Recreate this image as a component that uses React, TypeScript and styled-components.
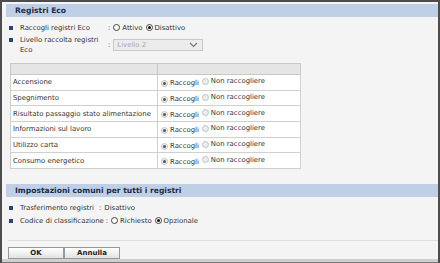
import React from "react";
import styled, { createGlobalStyle } from "styled-components";

const GlobalStyle = createGlobalStyle`
  html, body {
    margin: 0;
    padding: 0;
    background: #f4f4f4;
  }
  * {
    box-sizing: border-box;
  }
`;

const rows = [
  "Accensione",
  "Spegnimento",
  "Risultato passaggio stato alimentazione",
  "Informazioni sul lavoro",
  "Utilizzo carta",
  "Consumo energetico",
];

function Radio({ checked, faded }: { checked?: boolean; faded?: boolean }) {
  return (
    <RadioCircle $faded={faded}>{checked && <RadioDot $faded={faded} />}</RadioCircle>
  );
}

function App() {
  return (
    <>
      <GlobalStyle />
      <Frame>
        <Body>
          <SectionHeader>Registri Eco</SectionHeader>
          <Settings>
            <SettingRow>
              <Bullet />
              <Label>Raccogli registri Eco</Label>
              <Colon>:</Colon>
              <Choice>
                <Radio /> Attivo
              </Choice>
              <Choice>
                <Radio checked /> Disattivo
              </Choice>
            </SettingRow>
            <SettingRow>
              <Bullet $top />
              <Label>Livello raccolta registri Eco</Label>
              <Colon>:</Colon>
              <Select>
                <span>Livello 2</span>
                <svg width="9" height="6" viewBox="0 0 9 6">
                  <path d="M1 1 L4.5 4.5 L8 1" fill="none" stroke="#777" strokeWidth="1.2" />
                </svg>
              </Select>
            </SettingRow>
          </Settings>

          <Table>
            <thead>
              <tr>
                <HeadCell $first />
                <HeadCell />
              </tr>
            </thead>
            <tbody>
              {rows.map((r) => (
                <tr key={r}>
                  <NameCell>{r}</NameCell>
                  <ValueCell>
                    <Choice>
                      <Radio checked faded /> Raccogli
                    </Choice>
                    <Choice>
                      <Radio faded /> Non raccogliere
                    </Choice>
                  </ValueCell>
                </tr>
              ))}
            </tbody>
          </Table>

          <SectionDivider />
          <SectionHeader>Impostazioni comuni per tutti i registri</SectionHeader>
          <Settings>
            <SettingRow>
              <Bullet />
              <ShortLabel>Trasferimento registri</ShortLabel>
              <Colon>:</Colon>
              <span>Disattivo</span>
            </SettingRow>
            <SettingRow>
              <Bullet />
              <ShortLabel>Codice di classificazione</ShortLabel>
              <Colon>:</Colon>
              <Choice>
                <Radio /> Richiesto
              </Choice>
              <Choice>
                <Radio checked /> Opzionale
              </Choice>
            </SettingRow>
          </Settings>
        </Body>
        <Footer>
          <Button>OK</Button>
          <Button>Annulla</Button>
        </Footer>
        <BottomBar />
      </Frame>
    </>
  );
}

export default App;

const Frame = styled.div`
  width: 440px;
  height: 263px;
  border-top: 2px solid #4d4d4d;
  border-left: 2px solid #4d4d4d;
  border-right: 2px solid #4d4d4d;
  background: #f4f4f4;
  display: flex;
  flex-direction: column;
  font-family: "DejaVu Sans", Verdana, sans-serif;
  font-size: 6.9px;
  color: #333;
`;

const Body = styled.div`
  flex: 1;
  padding: 2px 0 0 4px;
`;

const SectionHeader = styled.div`
  height: 13px;
  line-height: 13px;
  background: #bfd0e6;
  color: #1e2c48;
  font-weight: bold;
  font-size: 7.6px;
  padding-left: 9px;
`;

const Settings = styled.div`
  display: flex;
  flex-direction: column;
  gap: 2px;
  padding: 5px 0 0 3px;
`;

const SettingRow = styled.div`
  display: flex;
  align-items: center;
  min-height: 11px;
`;

const Bullet = styled.span<{ $top?: boolean }>`
  width: 4px;
  height: 4px;
  background: #2b4577;
  margin-right: 7px;
  align-self: ${({ $top }) => ($top ? "flex-start" : "center")};
  margin-top: ${({ $top }) => ($top ? "3px" : "0")};
`;

const Label = styled.span`
  width: 86px;
  line-height: 10px;
`;

const ShortLabel = styled.span`
  min-width: 77px;
  white-space: nowrap;
`;

const Colon = styled.span`
  margin: 0 3px 0 2px;
`;

const Choice = styled.span`
  display: inline-flex;
  align-items: center;
  gap: 2px;
  margin-right: 3px;
  white-space: nowrap;
`;

const RadioCircle = styled.span<{ $faded?: boolean }>`
  width: 7px;
  height: 7px;
  border-radius: 50%;
  border: 1px solid ${({ $faded }) => ($faded ? "#c4c4c4" : "#444")};
  background: ${({ $faded }) => ($faded ? "#ececec" : "#fff")};
  display: inline-flex;
  align-items: center;
  justify-content: center;
`;

const RadioDot = styled.span<{ $faded?: boolean }>`
  width: 3px;
  height: 3px;
  border-radius: 50%;
  background: ${({ $faded }) => ($faded ? "#555" : "#111")};
`;

const Select = styled.div`
  width: 90px;
  height: 12px;
  border: 1px solid #c9c9c9;
  background: #ececec;
  color: #a8a8a8;
  display: flex;
  align-items: center;
  justify-content: space-between;
  padding: 0 4px 0 3px;
`;

const Table = styled.table`
  margin: 8px 0 0 4px;
  width: 291px;
  border-collapse: collapse;
  background: #fff;
  border: 1px solid #c8c8c8;
`;

const HeadCell = styled.th<{ $first?: boolean }>`
  height: 11px;
  padding: 0;
  background: #e5e5e5;
  border: 1px solid #c8c8c8;
  width: ${({ $first }) => ($first ? "147px" : "auto")};
`;

const NameCell = styled.td`
  height: 15.7px;
  padding: 0 0 0 2px;
  border: 1px solid #d0d0d0;
  white-space: nowrap;
`;

const ValueCell = styled.td`
  padding: 0 0 0 3px;
  border: 1px solid #d0d0d0;
  white-space: nowrap;
`;

const SectionDivider = styled.div`
  height: 15px;
`;

const Footer = styled.div`
  border-top: 1px solid #dedede;
  margin-left: 6px;
  padding: 6px 0 0 0;
  display: flex;
`;

const Button = styled.button`
  width: 56px;
  height: 12px;
  padding: 0;
  font-family: "DejaVu Sans", Verdana, sans-serif;
  font-size: 7px;
  font-weight: bold;
  color: #222;
  border: 1px solid #9a9a9a;
  background: linear-gradient(#ffffff, #e2e2e2);
  line-height: 10px;
`;

const BottomBar = styled.div`
  height: 4px;
  background: #cfcfcf;
  border-bottom: 1px solid #777;
`;
